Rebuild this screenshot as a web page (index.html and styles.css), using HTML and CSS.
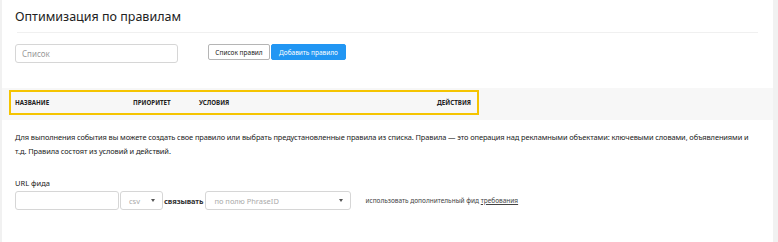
FILE: index.html
```html
<!DOCTYPE html>
<html lang="ru">
<head>
  <meta charset="UTF-8" />
  <title>Оптимизация по правилам</title>
  <link rel="stylesheet" href="styles.css">
</head>
<body>
  <div class="page">
    <header class="head">
      <h1>Оптимизация по правилам</h1>
    </header>

    <div class="toolbar">
      <input class="field list-field" type="text" placeholder="Список">
      <div class="buttons">
        <button class="btn btn-default">Список правил</button>
        <button class="btn btn-primary">Добавить правило</button>
      </div>
    </div>

    <div class="table-head">
      <div class="cols">
        <span class="col-name">Название</span>
        <span class="col-prio">Приоритет</span>
        <span class="col-cond">Условия</span>
        <span class="col-act">Действия</span>
      </div>
    </div>

    <p class="info">Для выполнения события вы можете создать свое правило или выбрать предустановленные правила из списка. Правила — это операция над рекламными объектами: ключевыми словами, объявлениями и т.д. Правила состоят из условий и действий.</p>

    <div class="feed">
      <label class="feed-label">URL фида</label>
      <div class="feed-row">
        <input class="field url-field" type="text">
        <div class="select csv-select">csv <span class="arrow"></span></div>
        <span class="link-word">связывать</span>
        <div class="select field-select">по полю PhraseID <span class="arrow"></span></div>
        <span class="extra">использовать дополнительный фид <a href="#">требования</a></span>
      </div>
    </div>
  </div>
</body>
</html>
```

FILE: styles.css
```css
body {
  margin: 0;
  font-family: "Noto Sans", Arial, sans-serif;
  color: #222;
  background: #f1f1f1;
}
.page {
  width: 771px;
  height: 242px;
  margin-left: 2px;
  background: #fff;
  overflow: hidden;
}
.head {
  margin: 0 15px;
  padding-top: 8px;
  height: 24px;
  border-bottom: 1px solid #f0f0f0;
}
.head h1 {
  margin: 0;
  font-size: 12.5px;
  font-weight: 400;
  color: #222;
  margin-left: -2px;
}
.toolbar {
  display: flex;
  align-items: flex-start;
  padding: 11px 13px 0;
  height: 44px;
}
.field {
  box-sizing: border-box;
  border: 1px solid #d6d6d6;
  border-radius: 3px;
  font-family: inherit;
  background: #fff;
}
.list-field {
  width: 163px;
  height: 19px;
  font-size: 8px;
  padding: 0 6px;
}
.list-field::placeholder {
  color: #999;
}
.buttons {
  display: flex;
  gap: 1px;
  margin-left: 30px;
}
.btn {
  height: 16px;
  padding: 0 6px;
  border: 1px solid #b5b5b5;
  border-radius: 2px;
  background: #fff;
  font-family: inherit;
  font-size: 6.5px;
  color: #222;
}
.btn-default {
  width: 62px;
}
.btn-primary {
  background: #2196f3;
  border-color: #2196f3;
  color: #fff;
  width: 75px;
}
.table-head {
  background: #f7f7f7;
  height: 32px;
  padding-top: 2px;
  box-sizing: border-box;
}
.cols {
  display: flex;
  align-items: center;
  margin-left: 7px;
  width: 470px;
  height: 25px;
  box-sizing: border-box;
  border: 2px solid #f5c400;
  padding: 0 6px 0 4px;
  font-size: 6.2px;
  font-weight: 700;
  text-transform: uppercase;
  color: #222;
}
.col-name { width: 118px; }
.col-prio { width: 66px; }
.col-cond { flex: 1; }
.info {
  margin: 10px 13px 0;
  font-size: 7.45px;
  line-height: 14px;
  color: #222;
  letter-spacing: -0.1px;
}
.feed {
  margin: 20px 13px 0;
}
.feed-label {
  display: block;
  font-size: 7.5px;
  color: #222;
  margin-bottom: 3px;
}
.feed-row {
  display: flex;
  align-items: center;
}
.url-field {
  width: 104px;
  height: 19px;
}
.select {
  box-sizing: border-box;
  height: 19px;
  border: 1px solid #d6d6d6;
  border-radius: 3px;
  display: flex;
  align-items: center;
  justify-content: space-between;
  font-size: 7.5px;
  color: #aaa;
  padding: 0 7px 0 8px;
}
.csv-select {
  width: 43px;
  margin-left: 1px;
}
.field-select {
  width: 146px;
  margin-left: 2px;
}
.arrow {
  width: 0;
  height: 0;
  border-left: 2.5px solid transparent;
  border-right: 2.5px solid transparent;
  border-top: 3px solid #555;
}
.link-word {
  font-size: 7.5px;
  font-weight: 700;
  color: #333;
  margin-left: 1px;
  letter-spacing: -0.1px;
}
.extra {
  margin-left: 14px;
  font-size: 6.5px;
  color: #444;
}
.extra a {
  color: #444;
}
```
